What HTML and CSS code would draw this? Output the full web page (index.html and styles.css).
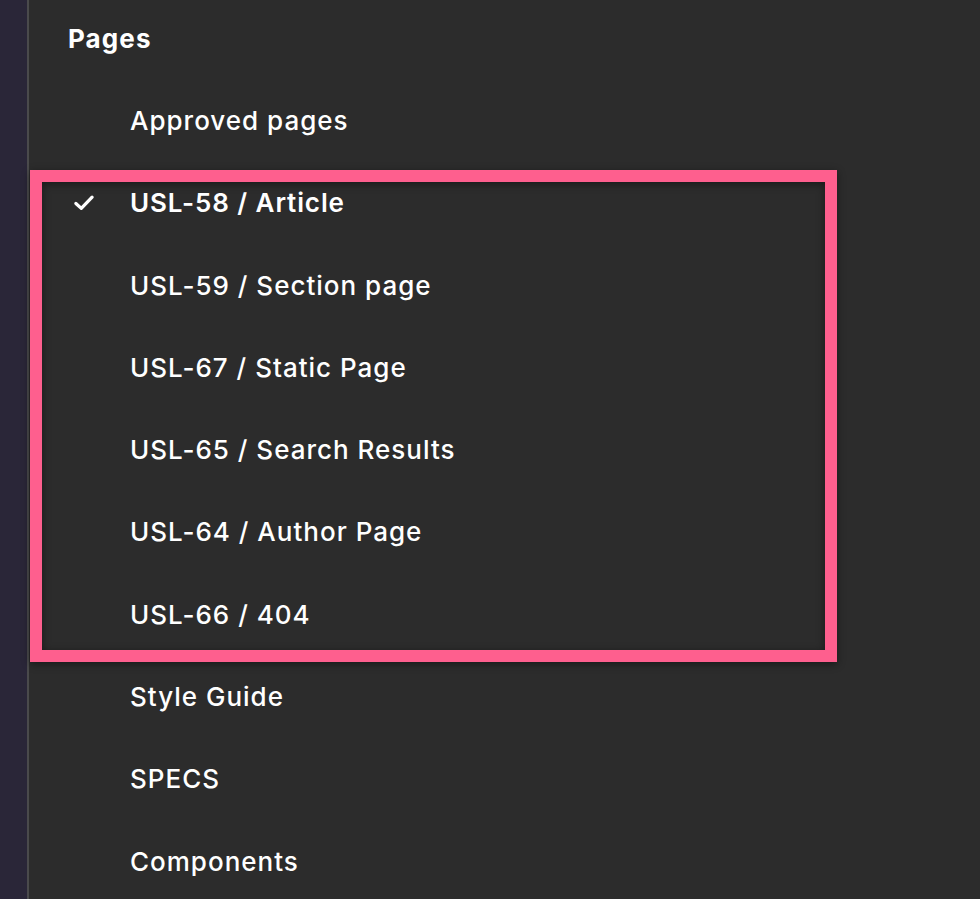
FILE: index.html
```html
<!DOCTYPE html>
<html>
<head>
<meta charset="utf-8">
<link rel="stylesheet" href="styles.css">
</head>
<body>
<div class="app">
  <div class="rail"></div>
  <div class="panel">
    <div class="title">Pages</div>
    <ul class="list">
      <li class="item">Approved pages</li>
      <li class="item active"><svg class="check" viewBox="0 0 24 20" width="22" height="18"><path d="M3 10.5 L9 16 L21 3.5" fill="none" stroke="#fff" stroke-width="3.6" stroke-linecap="round" stroke-linejoin="round"/></svg>USL-58 / Article</li>
      <li class="item">USL-59 / Section page</li>
      <li class="item">USL-67 / Static Page</li>
      <li class="item">USL-65 / Search Results</li>
      <li class="item">USL-64 / Author Page</li>
      <li class="item">USL-66 / 404</li>
      <li class="item">Style Guide</li>
      <li class="item">SPECS</li>
      <li class="item">Components</li>
    </ul>
    <div class="highlight"></div>
  </div>
</div>
</body>
</html>
```
FILE: styles.css
```css
html, body {
  margin: 0;
  padding: 0;
  background: #2c2c2c;
  height: 100%;
  overflow: hidden;
}
.app {
  display: flex;
  height: 899px;
  font-family: Inter, "Liberation Sans", sans-serif;
  color: #fff;
}
.rail {
  width: 27px;
  background: #2a2638;
  border-right: 2px solid #4a4a4c;
  flex: none;
}
.panel {
  position: relative;
  flex: 1;
  background: #2c2c2c;
}
.title {
  height: 77px;
  line-height: 77px;
  padding-left: 39px;
  font-size: 26px;
  font-weight: 700;
  letter-spacing: 1.1px;
}
.list {
  list-style: none;
  margin: 0;
  padding: 3px 0 0;
}
.item {
  position: relative;
  height: 82.3px;
  line-height: 82.3px;
  padding-left: 101px;
  font-size: 26px;
  font-weight: 500;
  letter-spacing: 1px;
  white-space: nowrap;
}
.item.active {
  font-weight: 600;
  letter-spacing: 0.9px;
}
.check {
  position: absolute;
  left: 44px;
  top: 32px;
}
.highlight {
  position: absolute;
  left: 1px;
  top: 170px;
  width: 783px;
  height: 468px;
  border: 12px solid #fe5f8e;
  box-shadow: 0 2px 8px rgba(0,0,0,0.45), inset 0 2px 8px rgba(0,0,0,0.45);
  pointer-events: none;
}
```
